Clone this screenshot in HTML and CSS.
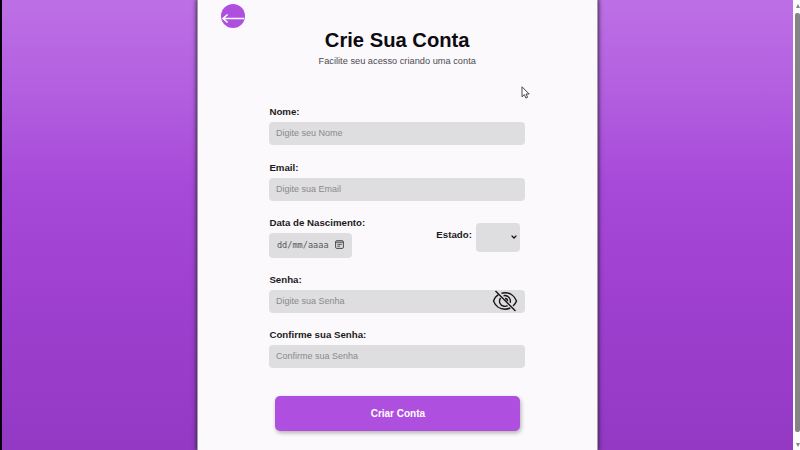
FILE: index.html
```html
<!DOCTYPE html>
<html lang="pt-BR">
<head>
<meta charset="UTF-8">
<title>Crie Sua Conta</title>
<link rel="stylesheet" href="styles.css">
</head>
<body>
<div class="page">
  <main class="card">
    <a class="back" aria-label="Voltar"><svg width="24" height="24" viewBox="0 0 24 24"><path d="M23 14.500H2M6.600 10.500 2 14.500l4.600 4"/></svg></a>
    <h1>Crie Sua Conta</h1>
    <p class="subtitle">Facilite seu acesso criando uma conta</p>
    <form class="form">
      <div class="field">
        <label>Nome:</label>
        <div class="input"><span class="ph">Digite seu Nome</span></div>
      </div>
      <div class="field">
        <label>Email:</label>
        <div class="input"><span class="ph">Digite sua Email</span></div>
      </div>
      <div class="row">
        <div>
          <label>Data de Nascimento:</label>
          <div class="date"><span>dd/mm/aaaa</span>
            <svg width="9" height="9" viewBox="0 0 9 9"><rect x=".6" y=".7" width="7.8" height="7.7" rx="1.2"/><path d="M.6 2.200h7.800M2.300 4.300h4.500M2.300 6.200h2.800"/></svg>
          </div>
        </div>
        <div class="state">
          <label>Estado:</label>
          <div class="select"><svg width="6" height="4" viewBox="0 0 6 4"><path d="M.6.600 3 3 5.400.600"/></svg></div>
        </div>
      </div>
      <div class="field">
        <label>Senha:</label>
        <div class="input"><span class="ph">Digite sua Senha</span>
          <svg class="eye" width="26" height="22" viewBox="0 0 26 22"><path d="M6.500 4.400C4.200 6 2.400 8.300 1.500 11c1.800 4.800 6.300 8.200 11.500 8.200 1.900 0 3.700-.4 5.300-1.200M9.500 3.200c1.100-.3 2.300-.5 3.500-.5 5.200 0 9.700 3.500 11.500 8.300-.7 1.900-1.900 3.600-3.500 5M8.600 8c-2.400 3.300-.5 7.700 3.300 8.300 1.300.2 2.600 0 3.700-.6M11.600 5.700c4.300-.9 7.800 3 6.500 7.100M13 8.500c1.500 0 2.600 1.200 2.600 2.700M3.500.900l20 20"/></svg>
        </div>
      </div>
      <div class="field">
        <label>Confirme sua Senha:</label>
        <div class="input"><span class="ph">Confirme sua Senha</span></div>
      </div>
      <button class="submit" type="button">Criar Conta</button>
    </form>
  </main>
  <svg class="cursor" width="9" height="13" viewBox="0 0 9 13"><path d="M1 .8v10l2.300-2.200 1.600 3.500 1.700-.8L5 8h3.200z"/></svg>
</div>
<div class="scrollbar"><i class="up"></i><i class="thumb"></i><i class="down"></i></div>
</body>
</html>
```
FILE: styles.css
```css
* { box-sizing: border-box; }
body {
  margin: 0;
  height: 450px;
  display: flex;
  overflow: hidden;
  background: #fbfafc;
  font-family: "Liberation Sans", Arial, sans-serif;
  color: #1c1a20;
}
.page {
  width: 793px;
  height: 450px;
  display: flex;
  justify-content: center;
  border-left: 2px solid #08000d;
  background: linear-gradient(#bd70e5 0, #b35fe0 90px, #a648d8 190px, #9f40d0 290px, #9339c4 450px);
}
.card {
  width: 401px;
  height: 450px;
  padding: 0 72px 0 71.400px;
  background: #fbf9fc;
  border: solid #a59bab;
  border-width: 0 1px;
  box-shadow: 0 0 4px 1px rgba(45, 35, 60, .85);
}
.back {
  display: block;
  width: 24px;
  height: 24px;
  margin: 4px 0 0 -48px;
  border-radius: 50%;
  background: #ae4fe0;
}
svg { display: block; fill: none; }
.back path { stroke: #fff; stroke-width: 1.6; }
h1 {
  margin: 0;
  height: 24px;
  line-height: 24px;
  font-size: 20.200px;
  text-align: center;
  color: #0d0b10;
  white-space: nowrap;
}
.subtitle {
  margin: 3px 0 0;
  height: 12px;
  line-height: 12px;
  font-size: 9.250px;
  text-align: center;
  color: #4e4b52;
  white-space: nowrap;
}
.form { margin-top: 39.200px; }
label {
  display: block;
  height: 12px;
  line-height: 12px;
  margin-bottom: 4px;
  font-size: 9.700px;
  font-weight: bold;
  white-space: nowrap;
}
.field { height: 55.400px; }
.input {
  width: 256px;
  height: 23px;
  padding: 0 7px 0 6.500px;
  display: flex;
  align-items: center;
  justify-content: space-between;
  border-radius: 4px;
  background: #dedddf;
}
.ph { margin-bottom: 1px; font-size: 9px; color: #8b898d; white-space: nowrap; }
.row { height: 57px; width: 256px; display: flex; }
.date {
  width: 83px;
  height: 25px;
  padding: 0 8px 1px 7.500px;
  display: flex;
  align-items: center;
  justify-content: space-between;
  border-radius: 4px;
  background: #dedddf;
  font: 8.600px "DejaVu Sans Mono", monospace;
  color: #59575b;
}
.date svg { stroke: #4a474c; stroke-width: 1; }
.state { margin: 6px 5px 0 auto; height: 29px; display: flex; gap: 4.500px; align-items: center; }
.state label { margin-bottom: 4px; }
.select {
  width: 44px;
  height: 29px;
  padding: 0 3px;
  display: flex;
  align-items: center;
  justify-content: flex-end;
  border-radius: 4px;
  background: #dedddf;
}
.select svg { stroke: #111; stroke-width: 1.3; }
.eye { stroke: #171519; stroke-width: 1.4; }
.submit {
  display: block;
  width: 245px;
  height: 35px;
  margin: 11.200px 0 0 6px;
  padding: 0;
  border: 0;
  border-radius: 5px;
  background: #ae4fe0;
  box-shadow: 1px 2px 4px rgba(0, 0, 0, .3);
  color: #fff;
  font: bold 10px "Liberation Sans", Arial, sans-serif;
}
.cursor { position: absolute; left: 521px; top: 86px; fill: #fff; stroke: #343238; stroke-width: .9; }
.scrollbar {
  width: 7px;
  height: 450px;
  padding: 4px 0 3px 2px;
  display: flex;
  flex-direction: column;
  align-items: center;
  background: #fbfafc;
}
.up, .down { border: solid transparent; border-width: 0 2.5px; }
.up { border-bottom: 4px solid #858386; }
.down { border-top: 4px solid #858386; margin-top: auto; }
.thumb { width: 5px; height: 419px; margin-top: 5px; border-radius: 2px; background: #858386; }
```
